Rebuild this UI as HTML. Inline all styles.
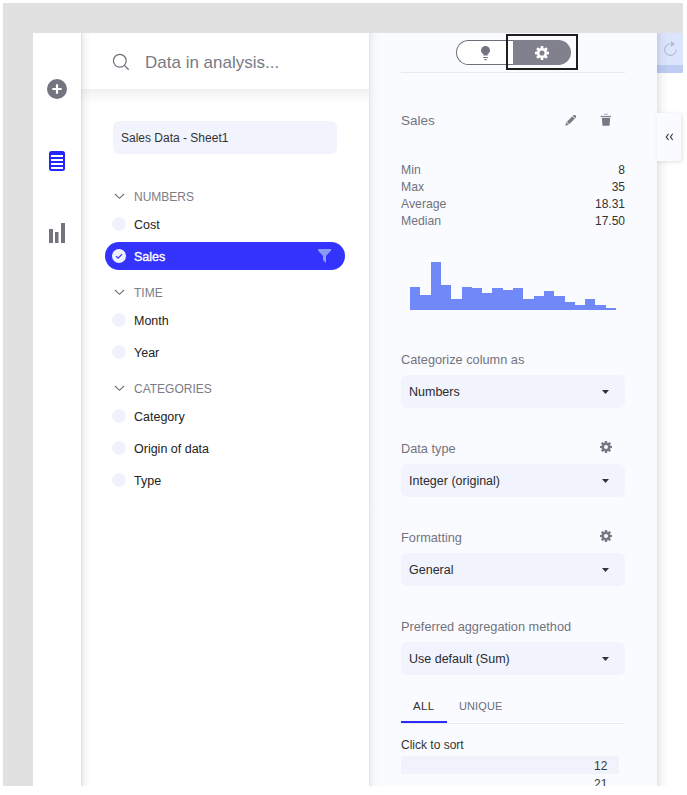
<!DOCTYPE html>
<html><head><meta charset="utf-8">
<style>
*{box-sizing:border-box;margin:0;padding:0}
html,body{width:687px;height:795px;overflow:hidden;background:#fff;font-family:"Liberation Sans",sans-serif}
.abs{position:absolute}
.t{position:absolute;white-space:nowrap;line-height:1}
.row{left:134px;font-size:12.5px;color:#222}
.dot{position:absolute;left:112px;width:14px;height:14px;border-radius:50%;background:#eff2fb}
.hdr{left:134px;font-size:12px;color:#7b7c86}
.chev{position:absolute;left:114px}
.lbl{left:401px;font-size:12.75px;color:#72737d}
.val{right:62px;font-size:12px;color:#333;text-align:right}
.sel{position:absolute;left:401px;width:224px;height:33px;background:#f1f4fc;border-radius:6px}
.sel span{position:absolute;left:8px;top:11px;font-size:12.5px;color:#2a2a30;line-height:1;white-space:nowrap}
.sel svg{position:absolute;left:201px;top:15px}
</style></head><body>
<div class="abs" style="left:3px;top:3px;width:680px;height:30px;background:#e1e1e1"></div>
<div class="abs" style="left:3px;top:3px;width:30px;height:783px;background:#e1e1e1"></div>
<div class="abs" style="left:33px;top:33px;width:48px;height:753px;background:#fff"></div>
<svg class="abs" style="left:47px;top:79px" width="20" height="20" viewBox="0 0 20 20"><circle cx="10" cy="10" r="10" fill="#73747f"/><path d="M10 5.3v9.4M5.3 10h9.4" stroke="#fff" stroke-width="2.2"/></svg>
<svg class="abs" style="left:49px;top:151px" width="16" height="20" viewBox="0 0 16 20"><rect x="0" y="0" width="16" height="20" rx="2.5" fill="#2626fc"/><rect x="2" y="4" width="12" height="2" fill="#fff"/><rect x="2" y="8" width="12" height="2" fill="#fff"/><rect x="2" y="12" width="12" height="2" fill="#fff"/><rect x="2" y="16" width="12" height="2" fill="#fff"/></svg>
<svg class="abs" style="left:49px;top:223px" width="16" height="20" viewBox="0 0 16 20"><rect x="0" y="6" width="4" height="14" fill="#73747f"/><rect x="6" y="9" width="3.5" height="11" fill="#73747f"/><rect x="12" y="0" width="4" height="20" fill="#73747f"/></svg>
<div class="abs" style="left:81px;top:33px;width:288px;height:753px;background:#fff"></div>
<div class="abs" style="left:81px;top:89px;width:288px;height:14px;background:linear-gradient(to bottom,rgba(0,0,0,.06),rgba(0,0,0,0))"></div>
<div class="abs" style="left:81px;top:33px;width:10px;height:753px;background:linear-gradient(to right,rgba(0,0,0,.15),rgba(0,0,0,.07) 12%,rgba(0,0,0,.03) 40%,rgba(0,0,0,0))"></div>
<svg class="abs" style="left:112px;top:53px" width="18" height="18" viewBox="0 0 18 18"><circle cx="7.8" cy="7.8" r="6.4" fill="none" stroke="#6d6e78" stroke-width="1.2"/><path d="M12.4 12.4l4.3 4.3" stroke="#6d6e78" stroke-width="1.3"/></svg>
<div class="t" style="left:145px;top:54px;font-size:17px;color:#797a84">Data in analysis...</div>
<div class="abs" style="left:113px;top:121px;width:224px;height:33px;background:#f1f4fd;border-radius:6px"></div>
<div class="t" style="left:121px;top:132px;font-size:12px;color:#333">Sales Data - Sheet1</div>
<div class="t hdr" style="top:191px">NUMBERS</div><svg class="chev" style="top:193px" width="11" height="7" viewBox="0 0 11 7"><path d="M1 1L5.5 5.3L10 1" fill="none" stroke="#6d6e78" stroke-width="1.15"/></svg>
<div class="dot" style="top:217px"></div><div class="t row" style="top:219px">Cost</div>
<div class="abs" style="left:105px;top:242px;width:240px;height:28px;border-radius:14px;background:#3333fd"></div>
<svg class="abs" style="left:112px;top:249px" width="14" height="14" viewBox="0 0 14 14"><circle cx="7" cy="7" r="7" fill="#eef1fb"/><path d="M4 7.1l2.1 2L10 5.3" fill="none" stroke="#3333fd" stroke-width="1.25"/></svg>
<div class="t" style="left:134px;top:251px;font-size:12.5px;color:#fff;-webkit-text-stroke:0.35px #fff">Sales</div>
<svg class="abs" style="left:318px;top:249px" width="13" height="14" viewBox="0 0 13 14"><path d="M0 0H13V1.5L8 7V14L5 11V7L0 1.5Z" fill="#8a9bf6"/></svg>
<div class="t hdr" style="top:287px">TIME</div><svg class="chev" style="top:289px" width="11" height="7" viewBox="0 0 11 7"><path d="M1 1L5.5 5.3L10 1" fill="none" stroke="#6d6e78" stroke-width="1.15"/></svg>
<div class="dot" style="top:313px"></div><div class="t row" style="top:315px">Month</div>
<div class="dot" style="top:345px"></div><div class="t row" style="top:347px">Year</div>
<div class="t hdr" style="top:383px">CATEGORIES</div><svg class="chev" style="top:385px" width="11" height="7" viewBox="0 0 11 7"><path d="M1 1L5.5 5.3L10 1" fill="none" stroke="#6d6e78" stroke-width="1.15"/></svg>
<div class="dot" style="top:409px"></div><div class="t row" style="top:411px">Category</div>
<div class="dot" style="top:441px"></div><div class="t row" style="top:443px">Origin of data</div>
<div class="dot" style="top:473px"></div><div class="t row" style="top:475px">Type</div>
<div class="abs" style="left:369px;top:33px;width:288px;height:753px;background:#fafbff"></div>
<div class="abs" style="left:369px;top:33px;width:10px;height:753px;background:linear-gradient(to right,rgba(0,0,0,.1),rgba(0,0,0,.05) 15%,rgba(0,0,0,.02) 45%,rgba(0,0,0,0))"></div>
<div class="abs" style="left:456px;top:40px;width:70px;height:25px;border:1px solid #6d6e78;border-right:none;border-radius:12.5px 0 0 12.5px;background:#fff"></div>
<svg class="abs" style="left:481px;top:46px" width="9" height="15" viewBox="0 0 9 15"><path d="M2.3 9.6V8C0.9 7.2 0 5.9 0 4.4 0 2 2 0 4.5 0S9 2 9 4.4C9 5.9 8.1 7.2 6.7 8V9.6Z" fill="#73747f"/><rect x="2.1" y="11" width="4.8" height="1" fill="#73747f"/><rect x="3.2" y="13.1" width="2.6" height="1" fill="#73747f"/></svg>
<div class="abs" style="left:513px;top:40px;width:58px;height:25px;border-radius:0 12.5px 12.5px 0;background:#80818c"></div>
<div class="abs" style="left:506px;top:34px;width:72px;height:36px;border:2px solid #1e1e1e"></div>
<svg class="abs" style="left:535.0px;top:46.0px" width="14" height="14" viewBox="-12 -12 24 24"><g fill="#fff"><path d="M-2.9 -6L-2.0 -12H2.0L2.9 -6Z" transform="rotate(0)"/><path d="M-2.9 -6L-2.0 -12H2.0L2.9 -6Z" transform="rotate(45)"/><path d="M-2.9 -6L-2.0 -12H2.0L2.9 -6Z" transform="rotate(90)"/><path d="M-2.9 -6L-2.0 -12H2.0L2.9 -6Z" transform="rotate(135)"/><path d="M-2.9 -6L-2.0 -12H2.0L2.9 -6Z" transform="rotate(180)"/><path d="M-2.9 -6L-2.0 -12H2.0L2.9 -6Z" transform="rotate(225)"/><path d="M-2.9 -6L-2.0 -12H2.0L2.9 -6Z" transform="rotate(270)"/><path d="M-2.9 -6L-2.0 -12H2.0L2.9 -6Z" transform="rotate(315)"/><circle r="8.3"/></g><circle r="4.4" fill="#80818c"/></svg>
<div class="abs" style="left:401px;top:72px;width:224px;height:1px;background:#e6e8f0"></div>
<div class="t" style="left:401px;top:114px;font-size:13.5px;color:#73747e">Sales</div>
<svg class="abs" style="left:565px;top:115px" width="11" height="11" viewBox="0 0 11 11"><g transform="translate(0.3,10.7) rotate(-45)"><path d="M0 0L3 -1.7H14.5V1.7H3Z" fill="#787985"/><rect x="3" y="-1.8" width=".8" height="3.6" fill="#fafbff"/><rect x="11.6" y="-1.8" width=".8" height="3.6" fill="#fafbff"/></g></svg>
<svg class="abs" style="left:600px;top:113px" width="12" height="13" viewBox="0 0 12 13"><rect x="4" y="0.7" width="4" height="1" fill="#787985" opacity=".55"/><rect x="0.7" y="2.9" width="10.4" height="1" fill="#787985"/><path d="M1.8 4.7H10.2L9.5 12.7H2.5Z" fill="#787985"/></svg>
<div class="t lbl" style="top:164px;font-size:12.25px">Min</div><div class="t val" style="top:164px">8</div>
<div class="t lbl" style="top:181px;font-size:12.25px">Max</div><div class="t val" style="top:181px">35</div>
<div class="t lbl" style="top:198px;font-size:12.25px">Average</div><div class="t val" style="top:198px">18.31</div>
<div class="t lbl" style="top:215px;font-size:12.25px">Median</div><div class="t val" style="top:215px">17.50</div>
<div class="abs" style="left:410.00px;top:287px;width:10.4px;height:23px;background:#7189f8"></div>
<div class="abs" style="left:420.30px;top:295px;width:10.4px;height:15px;background:#7189f8"></div>
<div class="abs" style="left:430.60px;top:262px;width:10.4px;height:48px;background:#7189f8"></div>
<div class="abs" style="left:440.90px;top:285px;width:10.4px;height:25px;background:#7189f8"></div>
<div class="abs" style="left:451.20px;top:299px;width:10.4px;height:11px;background:#7189f8"></div>
<div class="abs" style="left:461.50px;top:287px;width:10.4px;height:23px;background:#7189f8"></div>
<div class="abs" style="left:471.80px;top:288px;width:10.4px;height:22px;background:#7189f8"></div>
<div class="abs" style="left:482.10px;top:293px;width:10.4px;height:17px;background:#7189f8"></div>
<div class="abs" style="left:492.40px;top:288px;width:10.4px;height:22px;background:#7189f8"></div>
<div class="abs" style="left:502.70px;top:290px;width:10.4px;height:20px;background:#7189f8"></div>
<div class="abs" style="left:513.00px;top:288px;width:10.4px;height:22px;background:#7189f8"></div>
<div class="abs" style="left:523.30px;top:299px;width:10.4px;height:11px;background:#7189f8"></div>
<div class="abs" style="left:533.60px;top:296px;width:10.4px;height:14px;background:#7189f8"></div>
<div class="abs" style="left:543.90px;top:291px;width:10.4px;height:19px;background:#7189f8"></div>
<div class="abs" style="left:554.20px;top:296px;width:10.4px;height:14px;background:#7189f8"></div>
<div class="abs" style="left:564.50px;top:302px;width:10.4px;height:8px;background:#7189f8"></div>
<div class="abs" style="left:574.80px;top:305px;width:10.4px;height:5px;background:#7189f8"></div>
<div class="abs" style="left:585.10px;top:299px;width:10.4px;height:11px;background:#7189f8"></div>
<div class="abs" style="left:595.40px;top:305px;width:10.4px;height:5px;background:#7189f8"></div>
<div class="abs" style="left:605.70px;top:308px;width:10.4px;height:2px;background:#7189f8"></div>
<div class="t lbl" style="top:354px">Categorize column as</div><div class="sel" style="top:375px"><span>Numbers</span><svg width="7" height="4" viewBox="0 0 7 4"><path d="M0 0H7L3.5 3.9Z" fill="#333"/></svg></div>
<div class="t lbl" style="top:443px">Data type</div><svg class="abs" style="left:600.0px;top:441.0px" width="12" height="12" viewBox="-12 -12 24 24"><g fill="#777884"><path d="M-3.1 -6L-2.2 -12H2.2L3.1 -6Z" transform="rotate(0)"/><path d="M-3.1 -6L-2.2 -12H2.2L3.1 -6Z" transform="rotate(45)"/><path d="M-3.1 -6L-2.2 -12H2.2L3.1 -6Z" transform="rotate(90)"/><path d="M-3.1 -6L-2.2 -12H2.2L3.1 -6Z" transform="rotate(135)"/><path d="M-3.1 -6L-2.2 -12H2.2L3.1 -6Z" transform="rotate(180)"/><path d="M-3.1 -6L-2.2 -12H2.2L3.1 -6Z" transform="rotate(225)"/><path d="M-3.1 -6L-2.2 -12H2.2L3.1 -6Z" transform="rotate(270)"/><path d="M-3.1 -6L-2.2 -12H2.2L3.1 -6Z" transform="rotate(315)"/><circle r="8.2"/></g><circle r="4.0" fill="#fafbff"/></svg><div class="sel" style="top:464px"><span>Integer (original)</span><svg width="7" height="4" viewBox="0 0 7 4"><path d="M0 0H7L3.5 3.9Z" fill="#333"/></svg></div>
<div class="t lbl" style="top:532px">Formatting</div><svg class="abs" style="left:600.0px;top:530.0px" width="12" height="12" viewBox="-12 -12 24 24"><g fill="#777884"><path d="M-3.1 -6L-2.2 -12H2.2L3.1 -6Z" transform="rotate(0)"/><path d="M-3.1 -6L-2.2 -12H2.2L3.1 -6Z" transform="rotate(45)"/><path d="M-3.1 -6L-2.2 -12H2.2L3.1 -6Z" transform="rotate(90)"/><path d="M-3.1 -6L-2.2 -12H2.2L3.1 -6Z" transform="rotate(135)"/><path d="M-3.1 -6L-2.2 -12H2.2L3.1 -6Z" transform="rotate(180)"/><path d="M-3.1 -6L-2.2 -12H2.2L3.1 -6Z" transform="rotate(225)"/><path d="M-3.1 -6L-2.2 -12H2.2L3.1 -6Z" transform="rotate(270)"/><path d="M-3.1 -6L-2.2 -12H2.2L3.1 -6Z" transform="rotate(315)"/><circle r="8.2"/></g><circle r="4.0" fill="#fafbff"/></svg><div class="sel" style="top:553px"><span>General</span><svg width="7" height="4" viewBox="0 0 7 4"><path d="M0 0H7L3.5 3.9Z" fill="#333"/></svg></div>
<div class="t lbl" style="top:621px">Preferred aggregation method</div><div class="sel" style="top:642px"><span>Use default (Sum)</span><svg width="7" height="4" viewBox="0 0 7 4"><path d="M0 0H7L3.5 3.9Z" fill="#333"/></svg></div>
<div class="t" style="left:413px;top:701px;font-size:11.5px;color:#333;letter-spacing:0.3px">ALL</div>
<div class="t" style="left:459px;top:701px;font-size:11px;color:#6d6e78;letter-spacing:0.1px">UNIQUE</div>
<div class="abs" style="left:401px;top:723px;width:224px;height:1px;background:#e6e8f0"></div>
<div class="abs" style="left:401px;top:721px;width:46px;height:2px;background:#2a2afa"></div>
<div class="t" style="left:401px;top:739px;font-size:12px;color:#333">Click to sort</div>
<div class="abs" style="left:401px;top:756px;width:218px;height:18px;background:#f0f3fb"></div>
<div class="t" style="left:594px;top:760px;font-size:12px;color:#3a3a40">12</div>
<div class="t" style="left:594px;top:778px;font-size:12px;color:#3a3a40">21</div>
<div class="abs" style="left:369px;top:786px;width:318px;height:9px;background:#fff"></div>
<div class="abs" style="left:657px;top:33px;width:26px;height:32px;background:#dce5fd"></div>
<div class="abs" style="left:657px;top:65px;width:26px;height:8px;background:#bdcdf3"></div>
<svg class="abs" style="left:657px;top:33px" width="26" height="32" viewBox="657 33 26 32"><path d="M670.6 43.75A5.8 5.8 0 1 0 676.25 49.55" fill="none" stroke="#b4bbd0" stroke-width="1.1"/><path d="M671 41L675 43.9L671 46.8Z" fill="#b4bbd0"/></svg>
<div class="abs" style="left:657px;top:33px;width:12px;height:753px;background:linear-gradient(to right,rgba(0,0,0,.1),rgba(0,0,0,.03) 40%,rgba(0,0,0,0))"></div>
<div class="abs" style="left:657px;top:113px;width:24px;height:48px;background:#fafbff;border-radius:0 3px 3px 0;box-shadow:1px 1px 4px rgba(0,0,0,.12)"></div>
<svg class="abs" style="left:657px;top:113px" width="24" height="48" viewBox="657 113 24 48"><path d="M668.6 133.7L666.3 136.9L668.6 140M672.7 133.7L670.4 136.9L672.7 140" fill="none" stroke="#333" stroke-width="1.1"/></svg>
</body></html>
